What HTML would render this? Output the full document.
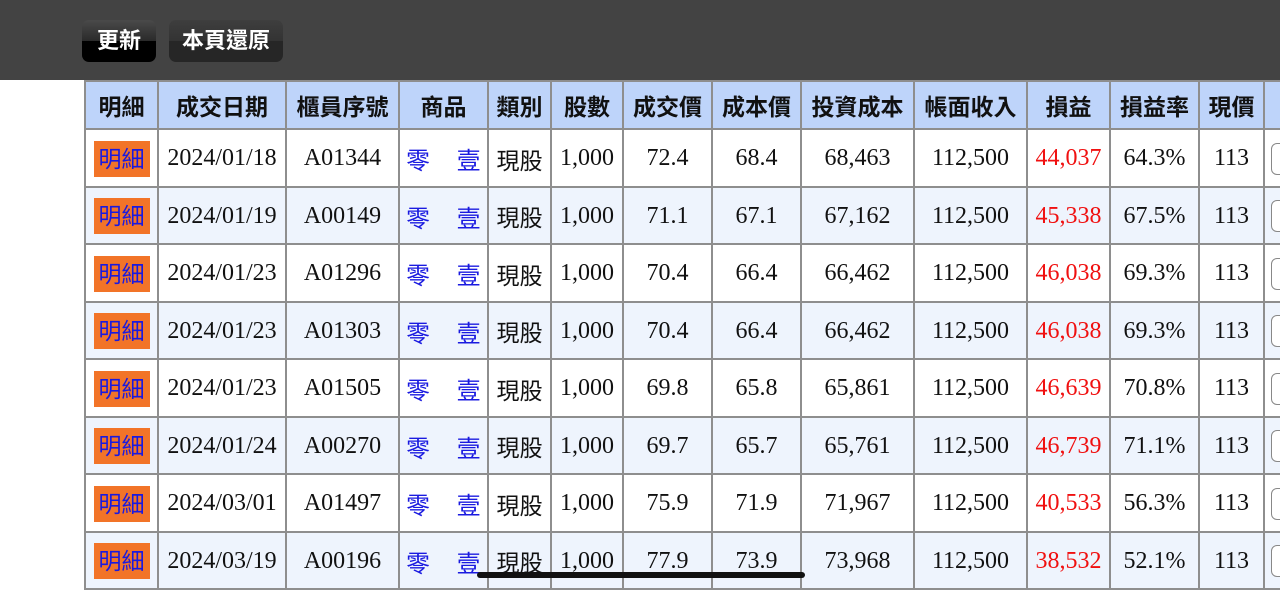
<!DOCTYPE html>
<html><head><meta charset="utf-8"><style>
body{margin:0;width:1280px;height:592px;overflow:hidden;background:#fff;font-family:"Liberation Serif","Noto Serif CJK SC",serif;position:relative}
.top{position:absolute;left:0;top:0;width:1280px;height:80px;background:#434343}
.btn{position:absolute;top:20px;height:42px;border-radius:7px;color:#fff;font:bold 22px "Liberation Sans","Noto Sans CJK TC",sans-serif;line-height:42px;text-align:center}
.b1{left:82px;width:74px;background:linear-gradient(#4a4a4a,#2a2a2a 50%,#000 50%,#000)}
.b2{left:169px;width:114px;background:linear-gradient(#3e3e3e,#333 50%,#262626 50%,#262626)}
table{position:absolute;left:84px;top:80px;border-collapse:collapse;table-layout:fixed;width:1219px}
td,th{border:2px solid #8e8e8e;text-align:center;padding:0;font-size:24px;white-space:nowrap;overflow:hidden}
th{background:#bed4fa;height:46px;font:bold 23px "Liberation Sans","Noto Sans CJK TC",sans-serif;color:#111}
td{height:53.5px;padding-top:2px;color:#111}
tr.a td{background:#eef4fd}
.d span{display:inline-block;background:#f27428;color:#1a1ae0;font-family:"Liberation Sans","Noto Sans CJK TC",sans-serif;width:56px;height:36px;line-height:36px;font-size:23px}
.p{color:#1a1ae0;font-family:"Liberation Sans","Noto Sans CJK TC",sans-serif;text-align:left;padding-left:6px}
.t{font-family:"Liberation Sans","Noto Sans CJK TC",sans-serif;font-size:23px}
.r{color:#f01010}
.cb{display:inline-block;width:20px;height:30px;border:1.5px solid #888;border-radius:6px;margin-left:6px;vertical-align:middle;background:#fff}
td.l{text-align:left}
.bar{position:absolute;left:477px;top:572px;width:328px;height:6px;border-radius:3px;background:#111}
</style></head><body>
<div class="top"></div>
<div class="btn b1">更新</div><div class="btn b2">本頁還原</div>
<table>
<colgroup><col style="width:73px"><col style="width:128px"><col style="width:113px"><col style="width:89px"><col style="width:63px"><col style="width:72px"><col style="width:89px"><col style="width:89px"><col style="width:113px"><col style="width:113px"><col style="width:83px"><col style="width:89px"><col style="width:65px"><col style="width:40px"></colgroup>
<tr><th>明細</th><th>成交日期</th><th>櫃員序號</th><th>商品</th><th>類別</th><th>股數</th><th>成交價</th><th>成本價</th><th>投資成本</th><th>帳面收入</th><th>損益</th><th>損益率</th><th>現價</th><th></th></tr>
<tr><td class="d"><span>明細</span></td><td>2024/01/18</td><td>A01344</td><td class="p">零&nbsp;&nbsp;&nbsp;&nbsp;壹</td><td class="t">現股</td><td>1,000</td><td>72.4</td><td>68.4</td><td>68,463</td><td>112,500</td><td class="r">44,037</td><td>64.3%</td><td>113</td><td class="l"><span class="cb"></span></td></tr>
<tr class="a"><td class="d"><span>明細</span></td><td>2024/01/19</td><td>A00149</td><td class="p">零&nbsp;&nbsp;&nbsp;&nbsp;壹</td><td class="t">現股</td><td>1,000</td><td>71.1</td><td>67.1</td><td>67,162</td><td>112,500</td><td class="r">45,338</td><td>67.5%</td><td>113</td><td class="l"><span class="cb"></span></td></tr>
<tr><td class="d"><span>明細</span></td><td>2024/01/23</td><td>A01296</td><td class="p">零&nbsp;&nbsp;&nbsp;&nbsp;壹</td><td class="t">現股</td><td>1,000</td><td>70.4</td><td>66.4</td><td>66,462</td><td>112,500</td><td class="r">46,038</td><td>69.3%</td><td>113</td><td class="l"><span class="cb"></span></td></tr>
<tr class="a"><td class="d"><span>明細</span></td><td>2024/01/23</td><td>A01303</td><td class="p">零&nbsp;&nbsp;&nbsp;&nbsp;壹</td><td class="t">現股</td><td>1,000</td><td>70.4</td><td>66.4</td><td>66,462</td><td>112,500</td><td class="r">46,038</td><td>69.3%</td><td>113</td><td class="l"><span class="cb"></span></td></tr>
<tr><td class="d"><span>明細</span></td><td>2024/01/23</td><td>A01505</td><td class="p">零&nbsp;&nbsp;&nbsp;&nbsp;壹</td><td class="t">現股</td><td>1,000</td><td>69.8</td><td>65.8</td><td>65,861</td><td>112,500</td><td class="r">46,639</td><td>70.8%</td><td>113</td><td class="l"><span class="cb"></span></td></tr>
<tr class="a"><td class="d"><span>明細</span></td><td>2024/01/24</td><td>A00270</td><td class="p">零&nbsp;&nbsp;&nbsp;&nbsp;壹</td><td class="t">現股</td><td>1,000</td><td>69.7</td><td>65.7</td><td>65,761</td><td>112,500</td><td class="r">46,739</td><td>71.1%</td><td>113</td><td class="l"><span class="cb"></span></td></tr>
<tr><td class="d"><span>明細</span></td><td>2024/03/01</td><td>A01497</td><td class="p">零&nbsp;&nbsp;&nbsp;&nbsp;壹</td><td class="t">現股</td><td>1,000</td><td>75.9</td><td>71.9</td><td>71,967</td><td>112,500</td><td class="r">40,533</td><td>56.3%</td><td>113</td><td class="l"><span class="cb"></span></td></tr>
<tr class="a"><td class="d"><span>明細</span></td><td>2024/03/19</td><td>A00196</td><td class="p">零&nbsp;&nbsp;&nbsp;&nbsp;壹</td><td class="t">現股</td><td>1,000</td><td>77.9</td><td>73.9</td><td>73,968</td><td>112,500</td><td class="r">38,532</td><td>52.1%</td><td>113</td><td class="l"><span class="cb"></span></td></tr>
</table>
<div class="bar"></div>
</body></html>
